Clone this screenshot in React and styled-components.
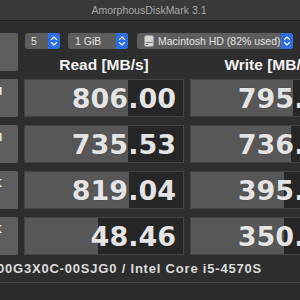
import React from 'react';
import styled, { createGlobalStyle } from 'styled-components';

const Global = createGlobalStyle`
  html, body { margin: 0; padding: 0; width: 300px; height: 300px; overflow: hidden; background: #2e2e2e; }
  body { font-family: "Liberation Sans", Arial, sans-serif; }
`;

const Window = styled.div`
  width: 397px;
  height: 300px;
  margin-left: -42px;
  display: flex;
  flex-direction: column;
  background: #2e2e2e;
`;

const TitleBar = styled.div`
  height: 20px;
  flex: none;
  background: #393939;
  border-bottom: 1px solid #1e1e1e;
  display: flex;
  align-items: center;
  justify-content: center;
  padding-right: 15px;
  color: #a8a8a8;
  font-size: 10.5px;
`;

const Grid = styled.div`
  display: grid;
  grid-template-columns: 60px 160px 159px;
  grid-template-rows: 16px 14px repeat(4, 38px);
  column-gap: 6px;
  row-gap: 8px;
  padding-top: 12px;
`;

const SideButton = styled.div`
  grid-column: 1;
  grid-row: ${p => p.$row};
  background: #5e5e5e;
  border-radius: 2px;
  display: flex;
  align-items: center;
  justify-content: center;
  padding-right: 10px;
  color: #f0f0f0;
  font-size: 11px;
  font-weight: bold;
  line-height: 14px;
  text-align: center;
  white-space: pre-line;
`;

const Toolbar = styled.div`
  grid-column: 2 / 4;
  grid-row: 1;
  display: flex;
  gap: 8px;
  padding-left: 1px;
`;

const Popup = styled.div`
  width: ${p => p.$w}px;
  height: 16px;
  margin-left: ${p => p.$ml || 0}px;
  background: #5d5d5d;
  border-radius: 3px;
  display: flex;
  align-items: center;
  overflow: hidden;
  color: #e2e2e2;
  font-size: 10.5px;
`;

const PopupLabel = styled.div`
  flex: 1;
  display: flex;
  align-items: center;
  gap: 4px;
  padding-left: ${p => p.$pad}px;
  white-space: nowrap;
`;

const Stepper = styled.div`
  width: 12px;
  height: 16px;
  background: #2d6fe3;
  display: flex;
  align-items: center;
  justify-content: center;
`;

const Header = styled.div`
  grid-column: ${p => p.$col};
  grid-row: 2;
  text-align: center;
  color: #f2f2f2;
  font-size: 15.5px;
  font-weight: bold;
  line-height: 16px;
  white-space: nowrap;
`;

const Meter = styled.div`
  grid-column: ${p => p.$col};
  grid-row: ${p => p.$row};
  border: 1px solid #454545;
  background: linear-gradient(to right, #575757 var(--fill), #262626 var(--fill));
  display: flex;
  align-items: center;
  justify-content: flex-end;
  padding-right: ${p => p.$pad}px;
  overflow: hidden;
`;

const Value = styled.span`
  font-family: "DejaVu Sans", Verdana, sans-serif;
  font-weight: bold;
  font-size: 27px;
  color: #e4e4e4;
  white-space: nowrap;
  text-shadow: 0 0 1px rgba(0,0,0,0.4);
`;

const Footer = styled.div`
  height: 27px;
  flex: none;
  border-bottom: 1px solid #444;
  display: flex;
  align-items: center;
  justify-content: flex-end;
  padding-right: 93px;
  color: #dcdcdc;
  font-size: 13px;
  font-weight: bold;
  letter-spacing: 0.8px;
  white-space: nowrap;
`;

const Bottom = styled.div`
  flex: 1;
  background: #2a2a2a;
`;

const Chevrons = () => (
  <svg width="8" height="12" viewBox="0 0 8 12">
    <path d="M1.5 4.5 L4 2 L6.5 4.5 M1.5 7.5 L4 10 L6.5 7.5" fill="none" stroke="#fff" strokeWidth="1.1" strokeLinecap="round" strokeLinejoin="round" />
  </svg>
);

const DiskIcon = () => (
  <svg width="10" height="12" viewBox="0 0 10 12">
    <rect x="0.5" y="0.5" width="9" height="11" rx="2" fill="#d4d4d4" stroke="#9a9a9a" />
    <rect x="1.5" y="7" width="7" height="1" fill="#7a7a7a" />
    <rect x="2" y="9" width="2" height="1" fill="#666" />
  </svg>
);

const rows = [
  { label: 'SEQ1M\nQD8', read: '806.00', rf: 65, write: '795.12', wf: 65 },
  { label: 'SEQ1M\nQD1', read: '735.53', rf: 65, write: '736.48', wf: 64 },
  { label: 'RND4K\nQD64', read: '819.04', rf: 66, write: '395.87', wf: 59 },
  { label: 'RND4K\nQD1', read: '48.46', rf: 46, write: '350.22', wf: 59 },
];

export default function App() {
  return (
    <>
      <Global />
      <Window>
        <TitleBar>AmorphousDiskMark 3.1</TitleBar>
        <Grid>
          <SideButton $row="1 / span 2">All</SideButton>
          <Toolbar>
            <Popup $w={35}>
              <PopupLabel $pad={6}>5</PopupLabel>
              <Stepper><Chevrons /></Stepper>
            </Popup>
            <Popup $w={60}>
              <PopupLabel $pad={7}>1 GiB</PopupLabel>
              <Stepper><Chevrons /></Stepper>
            </Popup>
            <Popup $w={156} $ml={1}>
              <PopupLabel $pad={7}><DiskIcon />Macintosh HD (82% used)</PopupLabel>
              <Stepper><Chevrons /></Stepper>
            </Popup>
          </Toolbar>
          <Header $col={2}>Read [MB/s]</Header>
          <Header $col={3}>Write [MB/s]</Header>
          {rows.map((r, i) => (
            <React.Fragment key={r.label}>
              <SideButton $row={i + 3}>{r.label}</SideButton>
              <Meter $col={2} $row={i + 3} $pad={7} style={{ '--fill': `${r.rf}%` }}>
                <Value>{r.read}</Value>
              </Meter>
              <Meter $col={3} $row={i + 3} $pad={6} style={{ '--fill': `${r.wf}%` }}>
                <Value>{r.write}</Value>
              </Meter>
            </React.Fragment>
          ))}
        </Grid>
        <Footer>WDC WD10EZEX-00G3X0C-00SJG0 / Intel Core i5-4570S</Footer>
        <Bottom />
      </Window>
    </>
  );
}
